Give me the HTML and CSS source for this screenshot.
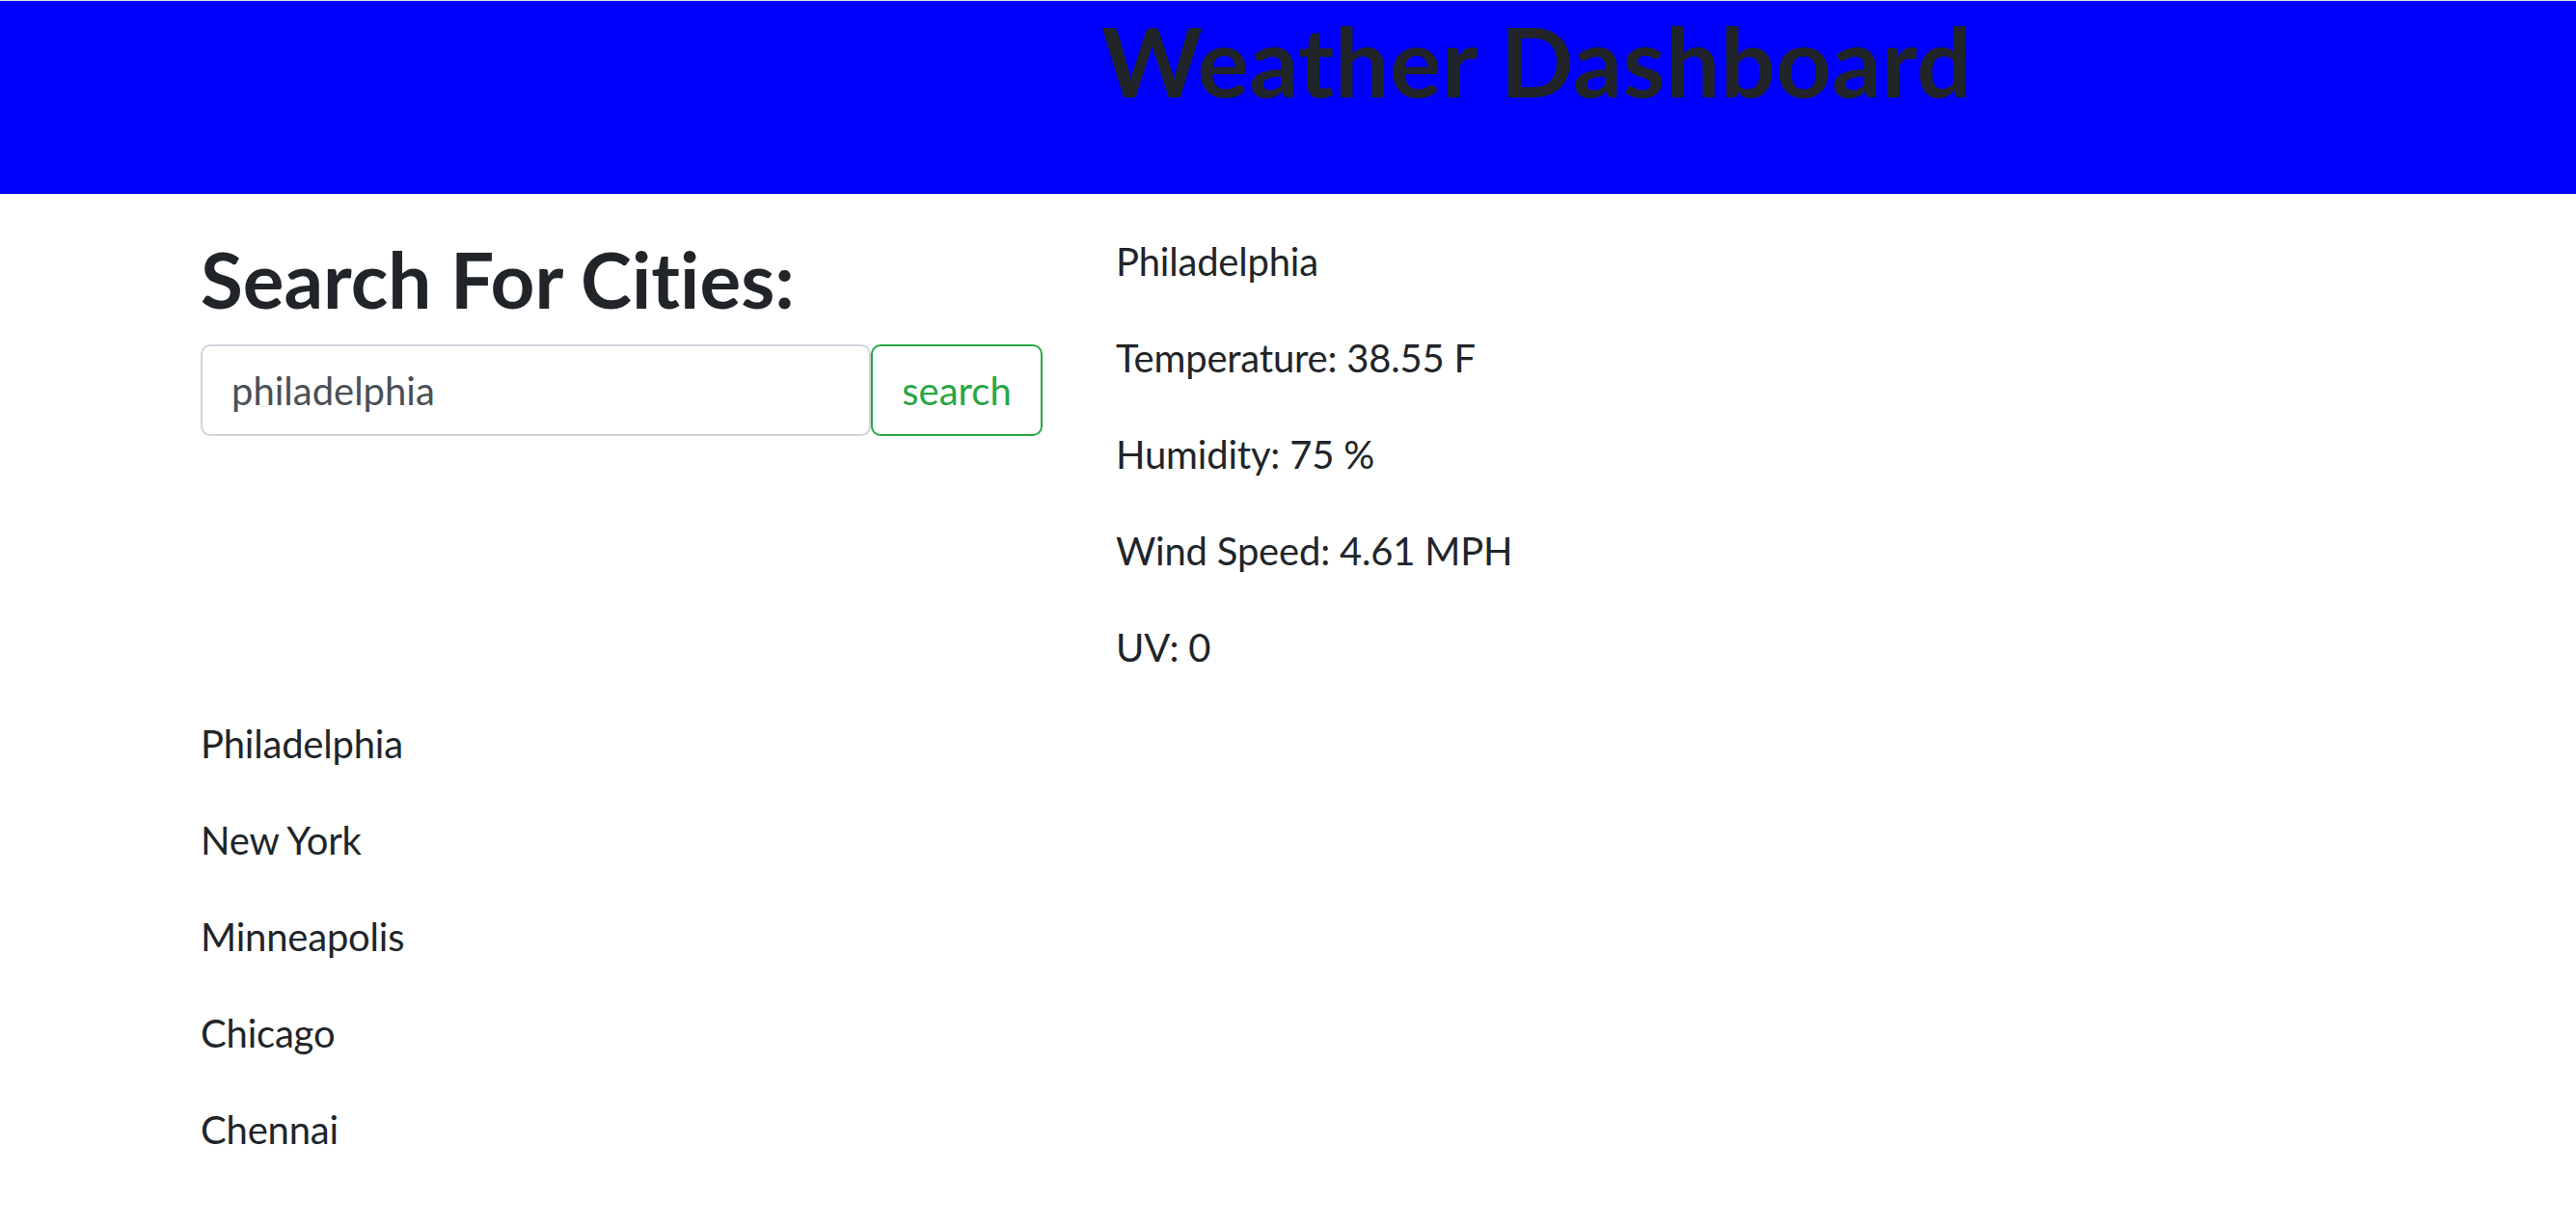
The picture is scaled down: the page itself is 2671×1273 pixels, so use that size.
FILE: index.html
```html
<!DOCTYPE html>
<html lang="en">
<head>
<meta charset="utf-8">
<title>Weather Dashboard</title>
<link rel="stylesheet" href="styles.css">
</head>
<body>
<header class="site-header">
  <h1 class="site-title">Weather Dashboard</h1>
</header>
<main class="page">
  <div class="top-row">
    <section class="search-col">
      <h2 class="search-title">Search For Cities:</h2>
      <form class="search-form">
        <input class="search-input" type="text" value="philadelphia">
        <button class="search-btn" type="button">search</button>
      </form>
    </section>
    <section class="weather-col">
      <p class="line">Philadelphia</p>
      <p class="line">Temperature: 38.55 F</p>
      <p class="line">Humidity: 75 %</p>
      <p class="line">Wind Speed: 4.61 MPH</p>
      <p class="line">UV: 0</p>
    </section>
  </div>
  <section class="history">
    <p class="line">Philadelphia</p>
    <p class="line">New York</p>
    <p class="line">Minneapolis</p>
    <p class="line">Chicago</p>
    <p class="line">Chennai</p>
  </section>
</main>
</body>
</html>
```

FILE: styles.css
```css
html, body {
  margin: 0;
  padding: 0;
  background: #ffffff;
}

body {
  font-family: "Lato", "Open Sans", sans-serif;
  font-size: 40px;
  line-height: 60px;
  color: #212529;
  border-top: 1px solid #dcdcdc;
  font-variant-ligatures: none;
  font-feature-settings: "liga" 0, "clig" 0;
}

.site-header {
  background: #0000ff;
  height: 200px;
  padding-left: 1142px;
  padding-top: 1px;
  box-sizing: border-box;
}

.site-title {
  margin: 0;
  font-size: 100px;
  line-height: 120px;
  font-weight: 700;
  letter-spacing: 0.6px;
  color: #212529;
}

.page {
  padding-left: 208px;
  padding-top: 40px;
}

.top-row {
  display: grid;
  grid-template-columns: 874px 1fr;
  column-gap: 75px;
  align-items: start;
}

.search-title {
  margin: 0 0 20px 0;
  font-size: 80px;
  line-height: 96px;
  font-weight: 700;
}

.search-form {
  display: flex;
  margin: 0;
}

.search-input {
  box-sizing: border-box;
  width: 695px;
  height: 95px;
  padding: 0 30px;
  border: 2px solid #ced4da;
  border-radius: 10px;
  font-family: inherit;
  font-size: 40px;
  color: #495057;
  background: #ffffff;
  outline: none;
}

.search-btn {
  box-sizing: border-box;
  width: 178px;
  height: 95px;
  padding: 0 30px;
  border: 2px solid #28a745;
  border-radius: 10px;
  background: #ffffff;
  color: #28a745;
  font-family: inherit;
  font-size: 40px;
}

.line {
  margin: 0 0 40px 0;
  letter-spacing: -0.2px;
}
```
